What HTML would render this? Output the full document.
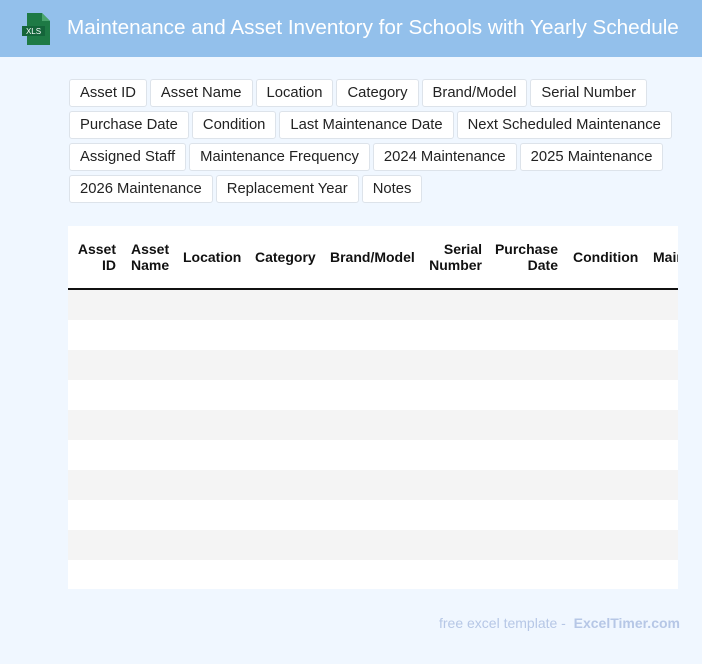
<!DOCTYPE html><html><head><style>
body{margin:0;width:702px;height:664px;background:#f0f7ff;font-family:"Liberation Sans",Arial,sans-serif;position:relative;overflow:hidden}
.hdr{position:absolute;left:0;top:0;width:702px;height:57px;background:#93c0eb}
.hdr h1{position:absolute;left:67px;top:16px;margin:0;font-size:20.7px;font-weight:normal;color:#fff;white-space:nowrap}
.tags{position:absolute;left:69px;top:79px;width:620px}
.tag{display:inline-block;height:28px;line-height:27px;box-sizing:border-box;padding:0 10px;border:1px solid #dde3ea;border-radius:3px;background:#fff;font-size:14.8px;color:#222;margin:0 3px 4px 0;vertical-align:top}
.tbl{position:absolute;left:68px;top:226px;width:610px;height:363px;background:#fff;overflow:hidden}
.th{position:absolute;font-weight:bold;font-size:14px;color:#111;line-height:16px;white-space:nowrap}
.line{position:absolute;left:0;top:62px;width:610px;height:2px;background:#111}
.row{position:absolute;left:0;width:610px;height:30px}
.foot{position:absolute;right:22px;top:615px;font-size:14px;color:#b6c7e6}
</style></head><body>
<div class="hdr">
<svg style="position:absolute;left:21px;top:13px" width="30" height="32" viewBox="0 0 30 32"><path d="M6 0h15l8 8v24H6z" fill="#1e7a45"/><path d="M21 0v8h8z" fill="#4aa56e"/><rect x="1" y="13" width="23" height="10" fill="#14653a"/><text x="12.5" y="21" font-size="8" fill="#fff" text-anchor="middle" font-family="Liberation Sans">XLS</text></svg>
<h1>Maintenance and Asset Inventory for Schools with Yearly Schedule</h1></div>
<div class="tags">
<span class="tag">Asset ID</span><span class="tag">Asset Name</span><span class="tag">Location</span><span class="tag">Category</span><span class="tag">Brand/Model</span><span class="tag">Serial Number</span><span class="tag">Purchase Date</span><span class="tag">Condition</span><span class="tag">Last Maintenance Date</span><span class="tag">Next Scheduled Maintenance</span><span class="tag">Assigned Staff</span><span class="tag">Maintenance Frequency</span><span class="tag">2024 Maintenance</span><span class="tag">2025 Maintenance</span><span class="tag">2026 Maintenance</span><span class="tag">Replacement Year</span><span class="tag">Notes</span>
</div>
<div class="tbl">
<div class="th" style="right:562px;top:15px;text-align:right">Asset<br>ID</div>
<div class="th" style="left:63px;top:15px">Asset<br>Name</div>
<div class="th" style="left:115px;top:23px">Location</div>
<div class="th" style="left:187px;top:23px">Category</div>
<div class="th" style="left:262px;top:23px">Brand/Model</div>
<div class="th" style="right:196px;top:15px;text-align:right">Serial<br>Number</div>
<div class="th" style="right:120px;top:15px;text-align:right">Purchase<br>Date</div>
<div class="th" style="left:505px;top:23px">Condition</div>
<div class="th" style="left:585px;top:23px">Maintenance</div>
<div class="line"></div>
<div class="row" style="top:64px;background:#f4f4f4"></div>
<div class="row" style="top:124px;background:#f4f4f4"></div>
<div class="row" style="top:184px;background:#f4f4f4"></div>
<div class="row" style="top:244px;background:#f4f4f4"></div>
<div class="row" style="top:304px;background:#f4f4f4"></div>
</div>
<div class="foot">free excel template - &nbsp;<b>ExcelTimer.com</b></div>
</body></html>
